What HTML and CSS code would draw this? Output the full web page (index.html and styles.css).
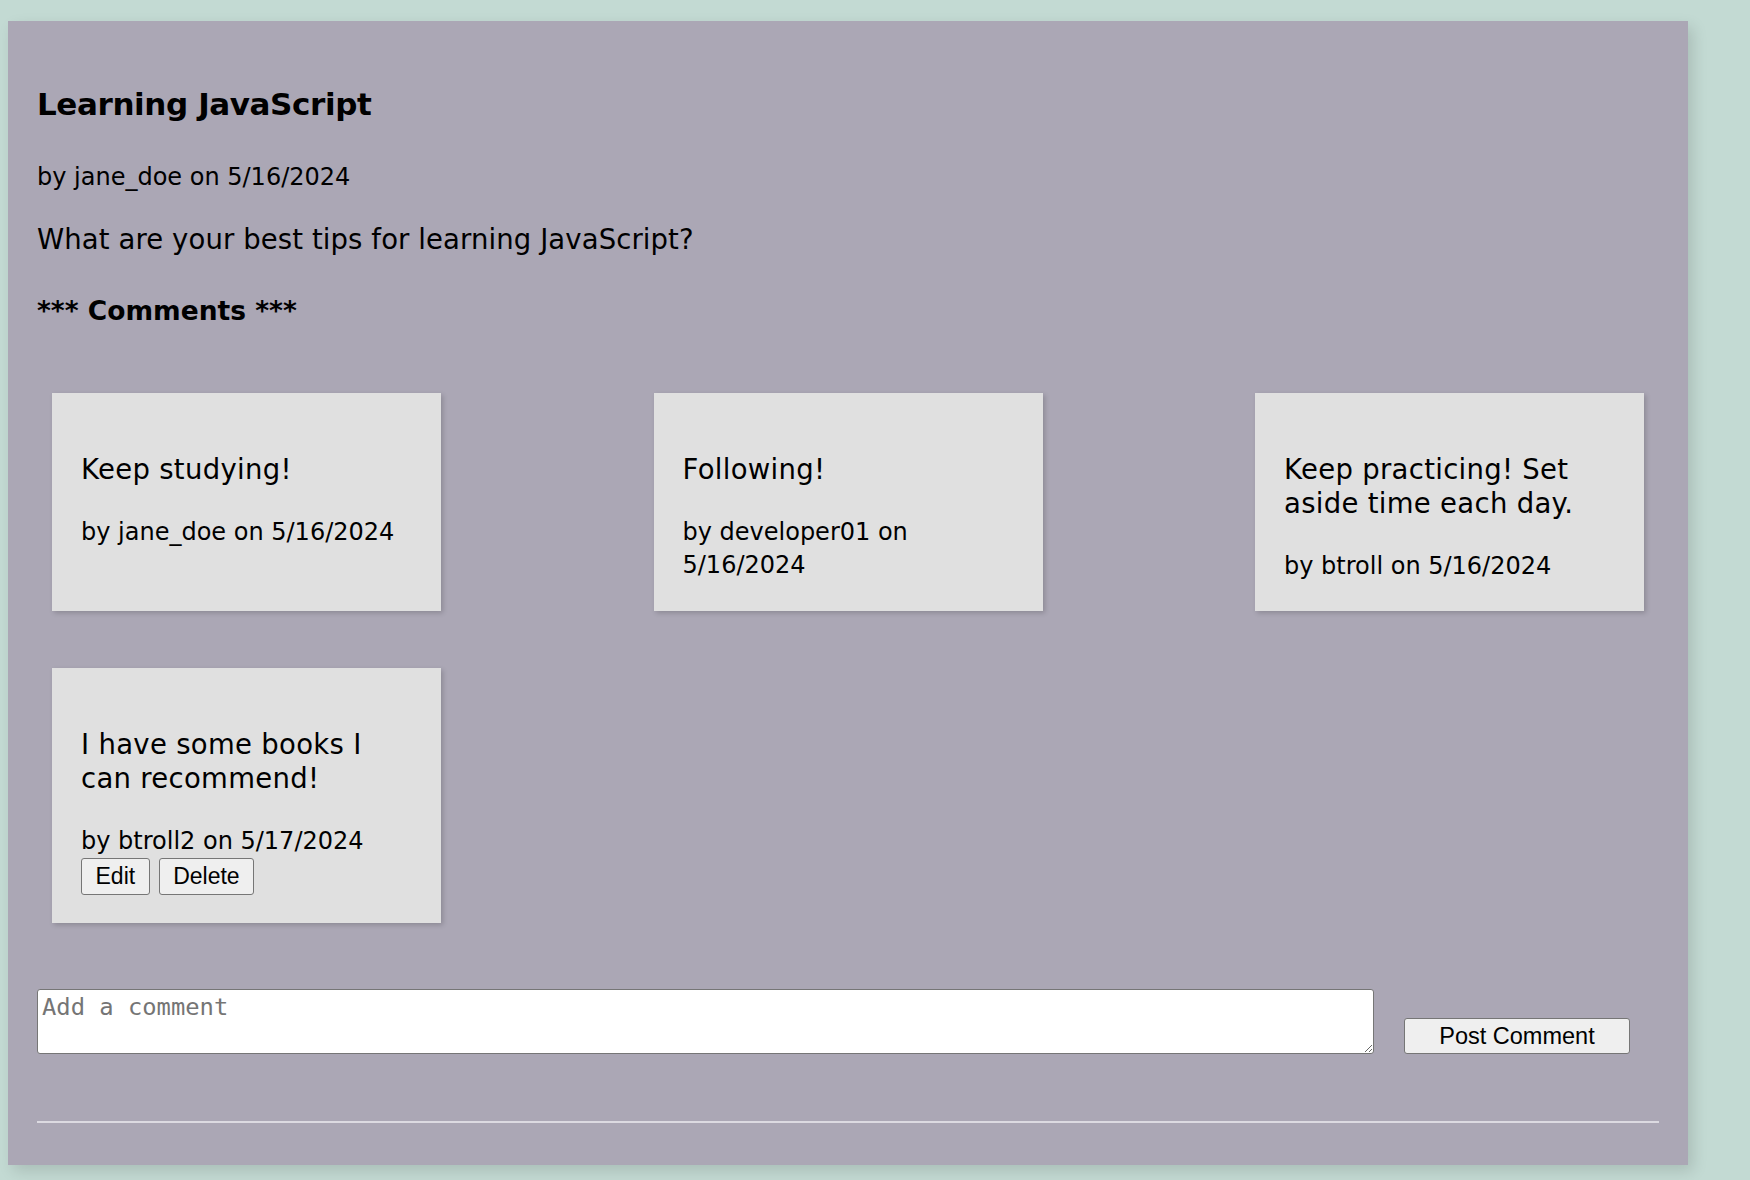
FILE: index.html
```html
<!DOCTYPE html>
<html lang="en">
    <head>
        <meta charset="UTF-8">
        <title> Learning JavaScript </title>
        <link rel="stylesheet" href="styles.css">
    </head>

    <body>
        <div class="post">
            <h1 class="post-title">Learning JavaScript</h1>
            <p class="post-meta">by jane_doe on 5/16/2024</p>
            <p class="post-body">What are your best tips for learning JavaScript?</p>
            <h3 class="comments-title">*** Comments ***</h3>

            <div class="comment-list">
                <div class="comment-card">
                    <p class="comment-text">Keep studying!</p>
                    <p class="comment-meta">by jane_doe on 5/16/2024</p>
                </div>
                <div class="comment-card">
                    <p class="comment-text">Following!</p>
                    <p class="comment-meta">by developer01 on 5/16/2024</p>
                </div>
                <div class="comment-card">
                    <p class="comment-text">Keep practicing! Set aside time each day.</p>
                    <p class="comment-meta">by btroll on 5/16/2024</p>
                </div>
                <div class="comment-card">
                    <p class="comment-text">I have some books I can recommend!</p>
                    <p class="comment-meta">by btroll2 on 5/17/2024</p>
                    <div class="comment-actions">
                        <button class="small-btn">Edit</button>
                        <button class="small-btn">Delete</button>
                    </div>
                </div>
            </div>

            <form class="comment-form">
                <textarea class="comment-input" placeholder="Add a comment"></textarea>
                <button class="post-btn" type="button">Post Comment</button>
            </form>
            <hr class="divider">
        </div>
    </body>
</html>
```

FILE: styles.css
```css
* {
    box-sizing: border-box;
}

body {
    margin: 0;
    background: #c3dad3;
    font-family: "DejaVu Sans", sans-serif;
    color: #000;
}

.post {
    width: 1680px;
    margin: 21px 0 15px 8px;
    padding: 63px 29px 42px 29px;
    background: #aba7b5;
    box-shadow: 5px 6px 14px rgba(0, 0, 0, 0.13);
}

.post-title {
    margin: 0 0 38px 0;
    font-size: 31px;
    line-height: 40px;
    letter-spacing: -0.4px;
    font-weight: bold;
}

.post-meta {
    margin: 0 0 30px 0;
    font-size: 24px;
    line-height: 30px;
}

.post-body {
    margin: 0 0 38px 0;
    font-size: 27.5px;
    line-height: 34px;
    letter-spacing: 0.1px;
}

.comments-title {
    margin: 0 0 65px 0;
    font-size: 26.5px;
    line-height: 34px;
    font-weight: bold;
}

.comment-list {
    display: flex;
    flex-wrap: wrap;
    justify-content: space-between;
    align-items: stretch;
    row-gap: 57px;
}

.comment-card {
    width: 389px;
    margin: 0 15px;
    padding: 28px 29px 28px 29px;
    background: #e0e0e0;
    box-shadow: 2px 2px 5px rgba(0, 0, 0, 0.18);
}

.comment-text {
    margin: 31px 0 30px 0;
    font-size: 27.5px;
    line-height: 34px;
    letter-spacing: 0.3px;
}

.comment-meta {
    margin: 0;
    font-size: 24px;
    line-height: 33px;
}

.comment-actions {
    display: flex;
    gap: 9px;
}

.small-btn, .post-btn {
    font-family: "Liberation Sans", Arial, sans-serif;
    font-size: 23px;
    color: #000;
    background: #efefef;
    border: 1px solid #767676;
    border-radius: 3px;
}

.small-btn {
    height: 37px;
    padding: 0 13.5px;
}

.comment-form {
    display: flex;
    align-items: flex-end;
    margin-top: 66px;
}

.comment-input {
    flex: 1;
    height: 65px;
    margin: 0;
    padding: 3px 4px;
    font-family: "DejaVu Sans Mono", monospace;
    font-size: 23.8px;
    border: 1px solid #767676;
    border-radius: 3px;
    background: #fff;
}

.comment-input::placeholder {
    color: #757575;
}

.post-btn {
    width: 226px;
    height: 36px;
    margin: 0 29px 0 30px;
    padding: 0;
    font-size: 23.5px;
}

.divider {
    margin: 67px 0 0 0;
    border: 0;
    border-top: 2px solid #dcdae1;
    height: 0;
}
```
